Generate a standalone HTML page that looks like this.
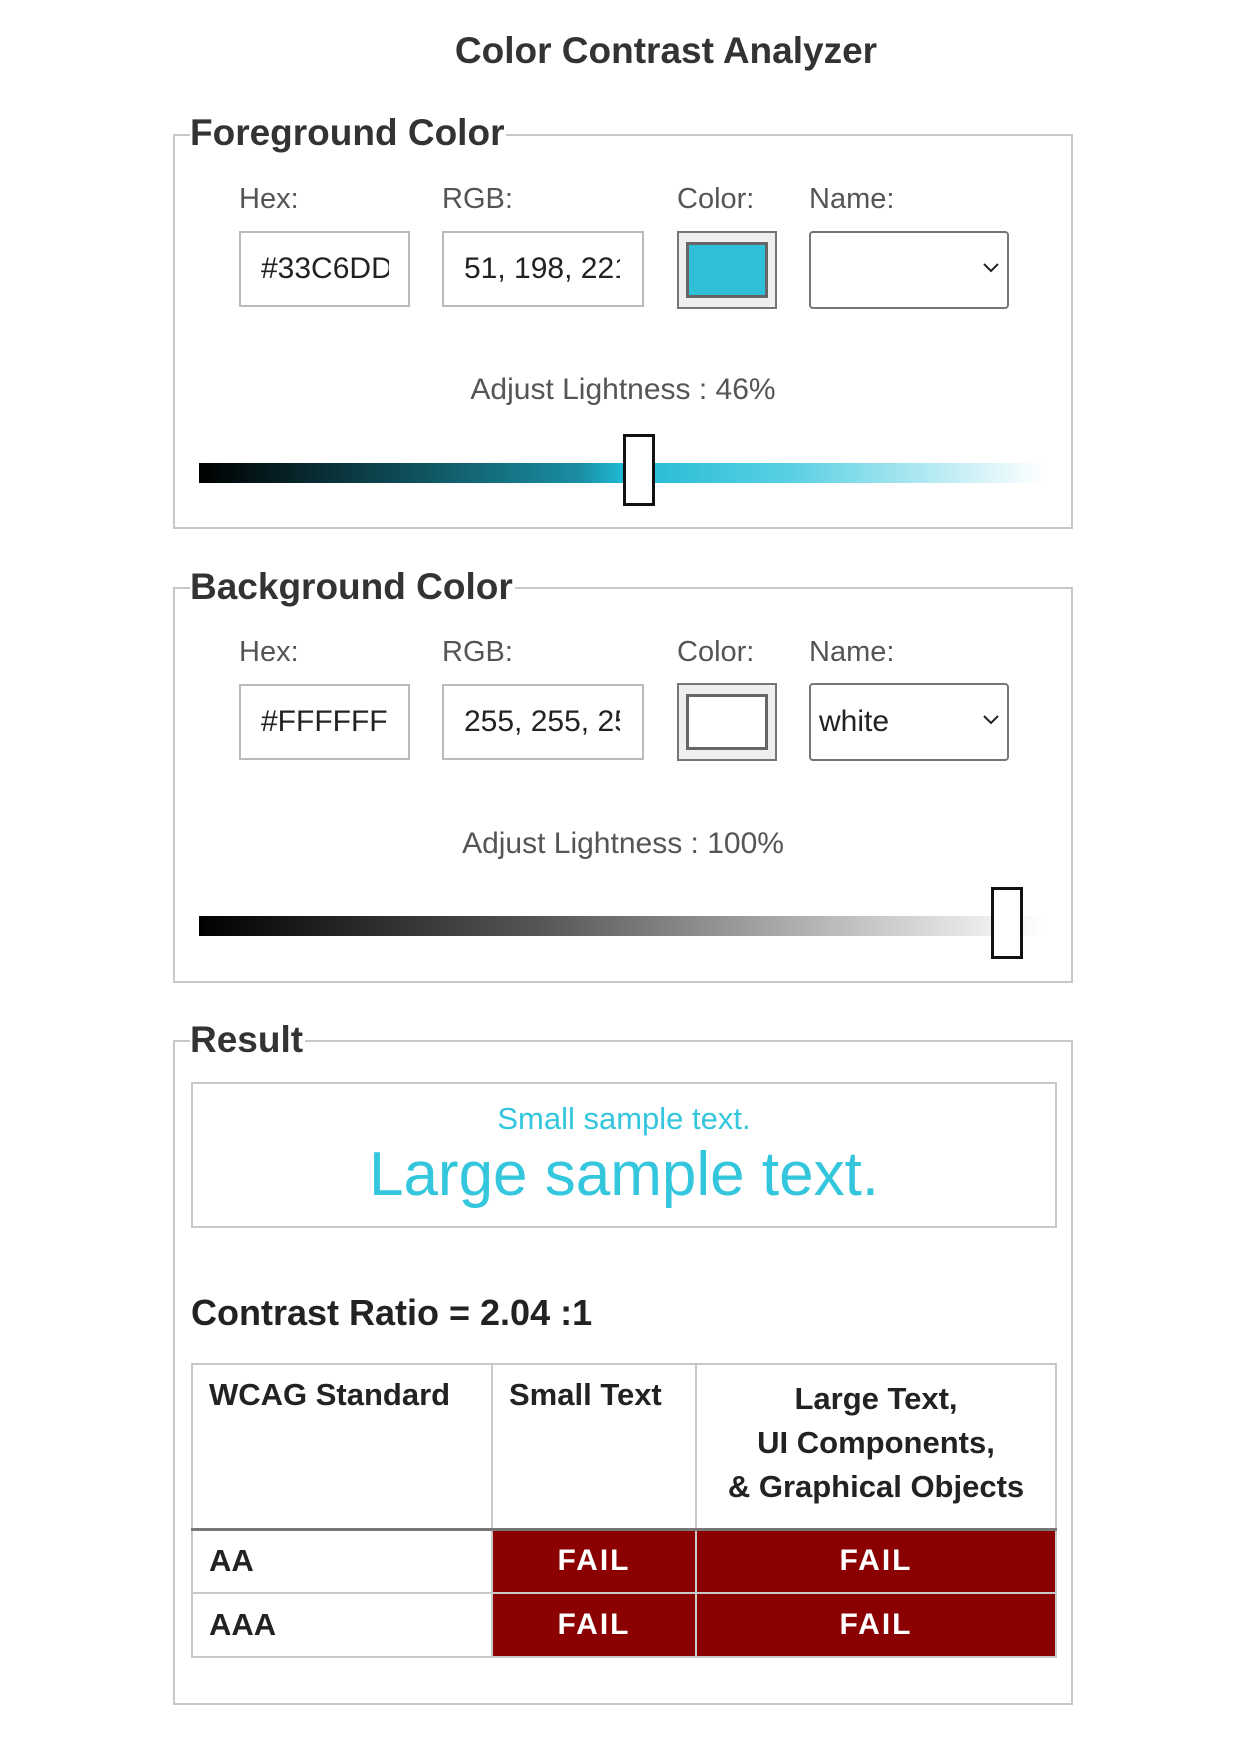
<!DOCTYPE html>
<html><head><meta charset="utf-8"><style>
*{box-sizing:border-box;margin:0;padding:0}
body{width:1246px;height:1754px;background:#fff;font-family:"Liberation Sans",Arial,sans-serif;color:#222;position:relative;overflow:hidden}
.a{position:absolute}
h1{position:absolute;left:0;width:1332px;text-align:center;top:30px;font-size:37px;font-weight:bold;color:#333}
.fs{position:absolute;left:173px;width:900px;border:2px solid #c8c8c8}
.lg{position:absolute;left:190px;font-size:37px;font-weight:bold;background:#fff;padding-right:2px;color:#333;line-height:42px}
.lab{position:absolute;font-size:29px;color:#555;line-height:32px}
.inp{position:absolute;height:76px;border:2px solid #bbb;font-size:30px;line-height:72px;padding-left:20px;color:#222}
.inp span{display:block;overflow:hidden;white-space:nowrap}
.col{position:absolute;width:100px;height:78px;background:#efefef;border:2px solid #767676}
.col div{position:absolute;left:7px;top:9px;right:7px;bottom:9px;border:3px solid #666}
.sel{position:absolute;width:200px;height:78px;border:2px solid #767676;border-radius:4px;font-size:30px;line-height:74px;padding-left:8px}
.sel svg{position:absolute;right:8px;top:30px}
.adj{position:absolute;left:173px;width:900px;text-align:center;font-size:30px;color:#555}
.track{position:absolute;left:199px;width:846px;height:20px}
.thumb{position:absolute;width:32px;height:72px;border:3px solid #111;background:#fff}
table{position:absolute;left:191px;top:1363px;width:866px;border-collapse:collapse}
td{border:2px solid #c8c8c8;font-size:31px;font-weight:bold;vertical-align:top;padding:0 16px}
.f{background:#8b0000;color:#fff;text-align:center;vertical-align:middle;letter-spacing:2px;font-size:30px}
</style></head><body>
<h1>Color Contrast Analyzer</h1>

<div class="fs" style="top:134px;height:395px"></div>
<div class="lg" style="top:112px">Foreground Color</div>
<div class="lab" style="left:239px;top:183px">Hex:</div>
<div class="lab" style="left:442px;top:183px">RGB:</div>
<div class="lab" style="left:677px;top:183px">Color:</div>
<div class="lab" style="left:809px;top:183px">Name:</div>
<div class="inp" style="left:239px;top:231px;width:171px"><span style="width:128px">#33C6DD</span></div>
<div class="inp" style="left:442px;top:231px;width:202px"><span style="width:156px">51, 198, 221</span></div>
<div class="col" style="left:677px;top:231px"><div style="background:#2fbfd8"></div></div>
<div class="sel" style="left:809px;top:231px"><svg width="16" height="10"><path d="M1 1 L8 8 L15 1" stroke="#222" stroke-width="2" fill="none"/></svg></div>
<div class="adj" style="top:373px">Adjust Lightness : 46%</div>
<div class="track" style="top:463px;background:linear-gradient(to right,#000,#1a8ea3 45%,#1fb9d3 50%,#5ad0e3 70%,#fff 100%)"></div>
<div class="thumb" style="left:623px;top:434px"></div>

<div class="fs" style="top:587px;height:396px"></div>
<div class="lg" style="top:566px">Background Color</div>
<div class="lab" style="left:239px;top:636px">Hex:</div>
<div class="lab" style="left:442px;top:636px">RGB:</div>
<div class="lab" style="left:677px;top:636px">Color:</div>
<div class="lab" style="left:809px;top:636px">Name:</div>
<div class="inp" style="left:239px;top:684px;width:171px"><span style="width:128px">#FFFFFF</span></div>
<div class="inp" style="left:442px;top:684px;width:202px"><span style="width:156px">255, 255, 255</span></div>
<div class="col" style="left:677px;top:683px"><div style="background:#fff"></div></div>
<div class="sel" style="left:809px;top:683px">white<svg width="16" height="10"><path d="M1 1 L8 8 L15 1" stroke="#222" stroke-width="2" fill="none"/></svg></div>
<div class="adj" style="top:827px">Adjust Lightness : 100%</div>
<div class="track" style="top:916px;background:linear-gradient(to right,#000,#555 40%,#bbb 75%,#fff 100%)"></div>
<div class="thumb" style="left:991px;top:887px"></div>

<div class="fs" style="top:1040px;height:665px"></div>
<div class="lg" style="top:1019px">Result</div>
<div class="a" style="left:191px;top:1082px;width:866px;height:146px;border:2px solid #c8c8c8;text-align:center;color:#33c6dd">
<div style="font-size:31px;margin-top:17px">Small sample text.</div>
<div style="font-size:62px;line-height:72px;margin-top:2px">Large sample text.</div>
</div>
<div class="a" style="left:191px;top:1292px;font-size:36px;font-weight:bold">Contrast Ratio = 2.04 :1</div>
<table>
<tr style="height:165px"><td style="width:300px;padding-top:12px">WCAG Standard</td><td style="width:204px;padding-top:12px">Small Text</td><td style="text-align:center;padding-top:12px;line-height:44px">Large Text,<br>UI Components,<br>&amp; Graphical Objects</td></tr>
<tr style="height:64px;border-top:3px solid #777"><td style="vertical-align:middle">AA</td><td class="f">FAIL</td><td class="f">FAIL</td></tr>
<tr style="height:64px"><td style="vertical-align:middle">AAA</td><td class="f">FAIL</td><td class="f">FAIL</td></tr>
</table>
</body></html>
